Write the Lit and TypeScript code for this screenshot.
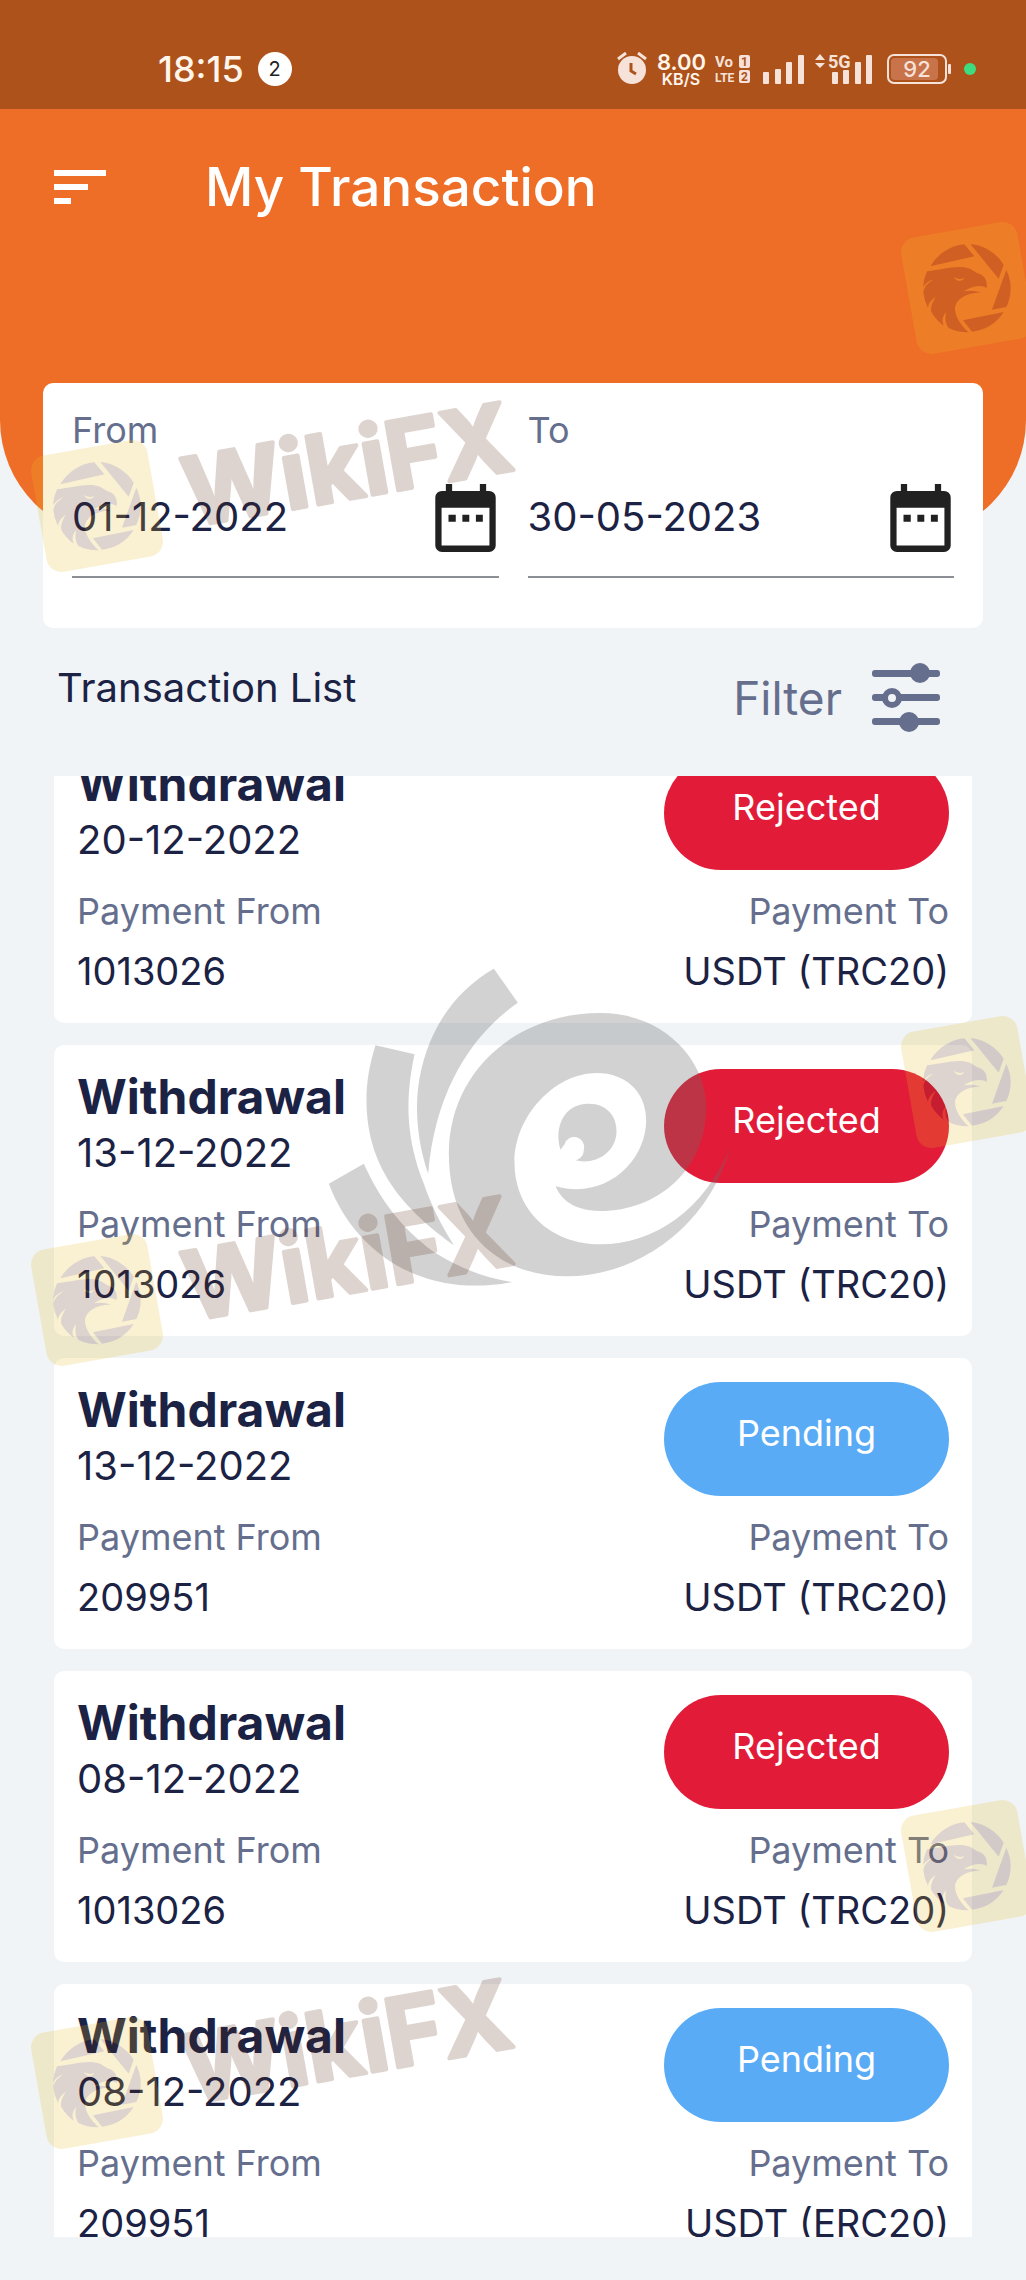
import { LitElement, html, svg, css } from "lit";
import { customElement, property } from "lit/decorators.js";

type Status = "Rejected" | "Pending";

interface Transaction {
  kind: string;
  date: string;
  status: Status;
  from: string;
  to: string;
}

const TRANSACTIONS: Transaction[] = [
  { kind: "Withdrawal", date: "20-12-2022", status: "Rejected", from: "1013026", to: "USDT (TRC20)" },
  { kind: "Withdrawal", date: "13-12-2022", status: "Rejected", from: "1013026", to: "USDT (TRC20)" },
  { kind: "Withdrawal", date: "13-12-2022", status: "Pending", from: "209951", to: "USDT (TRC20)" },
  { kind: "Withdrawal", date: "08-12-2022", status: "Rejected", from: "1013026", to: "USDT (TRC20)" },
  { kind: "Withdrawal", date: "08-12-2022", status: "Pending", from: "209951", to: "USDT (ERC20)" },
];

/* Tilted tile with an eagle inside a camera shutter, centred on the origin. */
const eagleTile = svg`
  <g transform="rotate(-10)">
    <rect x="-59" y="-59" width="118" height="118" rx="15" fill="#ebb923"></rect>
  </g>
  <g transform="scale(0.3333)" fill="#5a2814">
    <path d="M-110,-65 A132,132 0 0 1 -8,-131 L22,-95 Z"></path>
    <path d="M10,-132 A132,132 0 0 1 110,-70 L95,-28 Z"></path>
    <path d="M118,-55 A132,132 0 0 1 118,57 L75,65 Z"></path>
    <path d="M110,72 A132,132 0 0 1 15,131 L-12,97 Z"></path>
    <path d="M-120,-50 C-80,-54 -40,-66 -10,-62 C12,-60 22,-48 32,-44 C54,-38 62,-20 59,0 C45,-10 18,-8 -10,10
      C10,6 28,8 42,14 C0,12 -38,35 -36,65 C-34,90 -15,115 5,133 A132,132 0 0 1 -55,120 C-66,105 -66,92 -63,72
      C-74,86 -76,98 -70,113 A132,132 0 0 1 -107,72 C-110,56 -104,44 -94,26 C-110,38 -116,48 -117,60
      A132,132 0 0 1 -131,12 C-128,-4 -118,-14 -100,-26 C-114,-22 -124,-14 -132,-2 A132,132 0 0 1 -120,-50 Z"></path>
    <path d="M-40,-34 C-28,-26 -18,-26 -8,-30 C-14,-18 -32,-18 -40,-34 Z" fill="#ebb923"></path>
  </g>`;

@customElement("status-bar")
export class StatusBar extends LitElement {
  static styles = css`
    :host {
      display: flex;
      align-items: center;
      height: 81px;
      padding: 28px 50px 0 158px;
      background: #ae521c;
      color: #fff5ea;
    }
    .time {
      font-size: 36px;
      font-weight: 500;
      line-height: 40px;
    }
    .count {
      display: grid;
      place-items: center;
      width: 34px;
      height: 34px;
      margin-left: 14px;
      border-radius: 50%;
      background: #fff;
      color: #222;
      font-size: 20px;
      line-height: 20px;
    }
    .icons {
      display: flex;
      align-items: center;
      gap: 10px;
      margin-left: auto;
      fill: #f6e2d9;
    }
    .speed {
      width: 48px;
      text-align: center;
      font-weight: 600;
      font-size: 22px;
      line-height: 20px;
      white-space: nowrap;
    }
    .unit {
      display: block;
      font-size: 16px;
      line-height: 14px;
    }
    .icons text {
      font-family: "Roboto", sans-serif;
      font-weight: 700;
    }
    .icons .level {
      font-family: "Inter", sans-serif;
      font-weight: 500;
    }
    svg {
      display: block;
    }
  `;

  render() {
    return html`
      <span class="time">18:15</span>
      <span class="count">2</span>
      <div class="icons">
        <svg width="30" height="34" viewBox="0 0 30 34" role="img" aria-label="Alarm">
          <circle cx="15" cy="18" r="14"></circle>
          <path d="M1 7 L9 1 M29 7 L21 1" stroke="#f6e2d9" stroke-width="3" fill="none"></path>
          <path d="M14 11 V19 L19 22" stroke="#ae521c" stroke-width="3" fill="none"></path>
        </svg>
        <div class="speed">8.00<span class="unit">KB/S</span></div>
        <svg width="38" height="32" viewBox="0 0 38 32">
          <text x="0" y="14" font-size="15">Vo</text>
          <text x="0" y="29" font-size="12">LTE</text>
          <rect x="24" y="2" width="11" height="13" rx="2"></rect>
          <rect x="24" y="17" width="11" height="13" rx="2"></rect>
          <text x="26" y="13" font-size="12" fill="#ae521c">1</text>
          <text x="26" y="28" font-size="12" fill="#ae521c">2</text>
        </svg>
        <svg width="42" height="32" viewBox="0 0 42 32" role="img" aria-label="Signal">
          <rect x="0" y="19" width="6" height="12" rx="1"></rect>
          <rect x="12" y="16" width="6" height="15" rx="1"></rect>
          <rect x="23" y="9" width="6" height="22" rx="1"></rect>
          <rect x="35" y="2" width="6" height="29" rx="1"></rect>
        </svg>
        <svg width="62" height="32" viewBox="0 0 62 32" role="img" aria-label="5G signal">
          <path d="M0 7 L5 1 L10 7 Z M0 10 L5 15 L10 10 Z"></path>
          <text x="13" y="15" font-size="18">5G</text>
          <rect x="17" y="19" width="6" height="12" rx="1"></rect>
          <rect x="28" y="17" width="6" height="14" rx="1"></rect>
          <rect x="40" y="9" width="6" height="22" rx="1"></rect>
          <rect x="51" y="2" width="6" height="29" rx="1"></rect>
        </svg>
        <svg width="67" height="32" viewBox="0 0 67 32">
          <rect x="1" y="2" width="58" height="28" rx="6" fill="none" stroke="#f6e2d9" stroke-width="2"></rect>
          <rect x="4" y="5" width="47" height="22" rx="4" fill="#c8734a"></rect>
          <rect x="61" y="11" width="3" height="10" rx="1"></rect>
          <text class="level" x="30" y="24" font-size="22" text-anchor="middle">92</text>
        </svg>
        <svg width="12" height="12" viewBox="0 0 12 12"><circle cx="6" cy="6" r="6" fill="#3ddc7f"></circle></svg>
      </div>
    `;
  }
}

@customElement("date-field")
export class DateField extends LitElement {
  @property() label = "";
  @property() value = "";

  static styles = css`
    :host {
      display: block;
      min-width: 0;
    }
    .label {
      display: block;
      color: #656f8d;
      font-size: 36px;
      line-height: 40px;
    }
    .row {
      display: flex;
      align-items: center;
      margin-top: 34px;
      padding: 0 3px 24px 0;
      border-bottom: 2px solid #8c8f94;
    }
    .input {
      flex: 1;
      box-sizing: border-box;
      min-width: 0;
      height: 68px;
      padding: 0 0 4px;
      border: 0;
      outline: 0;
      background: none;
      color: #1b2244;
      font: inherit;
      font-size: 40px;
    }
    .pick {
      padding: 0;
      border: 0;
      background: none;
      cursor: pointer;
    }
    svg {
      display: block;
    }
  `;

  render() {
    return html`
      <label class="label" for="date">${this.label}</label>
      <div class="row">
        <input class="input" id="date" type="text" .value=${this.value} />
        <button class="pick" aria-label="Pick a date">
          <svg width="61" height="68" viewBox="0 0 183 206" fill="#212121">
            <path
              fill-rule="evenodd"
              d="M32 0 H51 V21 H135 V0 H154 V21 H163 A20 20 0 0 1 183 41 V186 A20 20 0 0 1 163 206 H20
                A20 20 0 0 1 0 186 V41 A20 20 0 0 1 20 21 H32 Z M19 72 V186 H164 V72 Z"
            ></path>
            <path d="M40 93 H62 V114 H40 Z M82 93 H103 V114 H82 Z M123 93 H144 V114 H123 Z"></path>
          </svg>
        </button>
      </div>
    `;
  }
}

@customElement("transaction-card")
export class TransactionCard extends LitElement {
  @property({ attribute: false }) item!: Transaction;

  static styles = css`
    :host {
      display: block;
      padding: 24px 23px 21px;
      border-radius: 10px;
      background: #fff;
      color: #1b2244;
    }
    .row {
      display: flex;
      justify-content: space-between;
    }
    .details {
      margin-top: 12px;
    }
    .kind {
      margin: 0;
      font-size: 48px;
      font-weight: 700;
      line-height: 56px;
    }
    .date {
      font-size: 40px;
      line-height: 56px;
    }
    .status {
      display: flex;
      align-items: center;
      justify-content: center;
      box-sizing: border-box;
      width: 285px;
      height: 114px;
      padding-bottom: 12px;
      border-radius: 57px;
      color: #fff;
      font-size: 36px;
    }
    .rejected {
      background: #e21c38;
    }
    .pending {
      background: #5aabf6;
    }
    .label {
      color: #656f8d;
      font-size: 36px;
      line-height: 58px;
    }
    .value {
      font-size: 38px;
      line-height: 62px;
    }
    .end {
      text-align: right;
    }
  `;

  render() {
    const { kind, date, status, from, to } = this.item;
    return html`
      <div class="row">
        <div>
          <h2 class="kind">${kind}</h2>
          <div class="date">${date}</div>
        </div>
        <div class="status ${status.toLowerCase()}">${status}</div>
      </div>
      <div class="row details">
        <div>
          <div class="label">Payment From</div>
          <div class="value">${from}</div>
        </div>
        <div class="end">
          <div class="label">Payment To</div>
          <div class="value">${to}</div>
        </div>
      </div>
    `;
  }
}

@customElement("app-root")
export class AppRoot extends LitElement {
  static styles = css`
    :host {
      position: relative;
      display: flex;
      flex-direction: column;
      height: 100vh;
      overflow: hidden;
      background: #f0f4f7;
      color: #1b2244;
      font-family: "Inter", "Open Sans", sans-serif;
    }
    .header {
      display: flex;
      align-items: center;
      gap: 99px;
      padding: 46px 54px 319px;
      border-radius: 0 0 118px 118px;
      background: #ee6e27;
      color: #fff;
    }
    .menu,
    .filter {
      padding: 0;
      border: 0;
      background: none;
      color: inherit;
      font: inherit;
      cursor: pointer;
    }
    .title {
      margin: 0;
      font-size: 53px;
      font-weight: 500;
      line-height: 64px;
    }
    .range {
      display: grid;
      grid-template-columns: 1fr 1fr;
      gap: 29px;
      margin: -155px 43px 0;
      padding: 27px 29px 50px;
      border-radius: 10px;
      background: #fff;
    }
    .list-head {
      display: flex;
      justify-content: space-between;
      align-items: flex-start;
      padding: 32px 86px 40px 57px;
    }
    .list-title {
      margin: 0;
      font-size: 40px;
      font-weight: 400;
      line-height: 56px;
    }
    .filter {
      display: flex;
      align-items: center;
      gap: 30px;
      height: 76px;
      color: #656f8d;
      font-size: 46px;
    }
    .list {
      display: flex;
      flex: 1;
      flex-direction: column;
      gap: 22px;
      min-height: 0;
      margin: 0 54px 43px;
      overflow-y: auto;
      scrollbar-width: none;
    }
    .card {
      flex: none;
    }
    svg {
      display: block;
    }
    .mark {
      position: absolute;
      opacity: 0.2;
      pointer-events: none;
    }
    .mark-left {
      left: 20px;
    }
    .mark-right {
      right: 0;
    }
    .mark-text {
      font-size: 95px;
      font-weight: 700;
      fill: #5a2814;
      stroke: #5a2814;
      stroke-width: 4px;
      stroke-linejoin: round;
    }
    .row-1 {
      top: 350px;
    }
    .row-2 {
      top: 1144px;
    }
    .row-3 {
      top: 1927px;
    }
    .row-a {
      top: 212px;
    }
    .row-b {
      top: 1006px;
    }
    .row-c {
      top: 1790px;
    }
    .eye {
      position: absolute;
      top: 967px;
      left: 327px;
      opacity: 0.3;
      pointer-events: none;
    }
  `;

  /* The list opens part of the way into its first card. */
  async firstUpdated() {
    const list = this.renderRoot.querySelector(".list") as HTMLElement;
    const cards = Array.from(list.querySelectorAll("transaction-card")) as TransactionCard[];
    await Promise.all(cards.map((card) => card.updateComplete));
    list.scrollTop = 44;
  }

  render() {
    return html`
      <status-bar></status-bar>
      <header class="header">
        <button class="menu" aria-label="Menu">
          <svg width="52" height="34" viewBox="0 0 52 34" fill="#fff">
            <path d="M0 0 H52 V6 H0 Z M0 14 H34 V20 H0 Z M0 28 H17 V34 H0 Z"></path>
          </svg>
        </button>
        <h1 class="title">My Transaction</h1>
      </header>
      <section class="range">
        <date-field label="From" value="01-12-2022"></date-field>
        <date-field label="To" value="30-05-2023"></date-field>
      </section>
      <div class="list-head">
        <h2 class="list-title">Transaction List</h2>
        <button class="filter">
          Filter
          <svg width="68" height="70" viewBox="0 0 68 70" fill="#656f8d">
            <rect x="0" y="7" width="68" height="7" rx="3"></rect>
            <rect x="0" y="31" width="68" height="7" rx="3"></rect>
            <rect x="0" y="55" width="68" height="7" rx="3"></rect>
            <circle cx="48" cy="10" r="10"></circle>
            <circle cx="20" cy="35" r="7" fill="#f0f4f7" stroke="#656f8d" stroke-width="6"></circle>
            <circle cx="37" cy="59" r="10"></circle>
          </svg>
        </button>
      </div>
      <main class="list">
        ${TRANSACTIONS.map((item) => html`<transaction-card class="card" .item=${item}></transaction-card>`)}
      </main>
      <svg class="eye" width="407" height="320" viewBox="80 80 1220 960" fill="#6c6c6c" aria-hidden="true">
        <path d="M580,85 L652,187 C520,280 405,440 383,700 C352,610 345,520 352,450 C370,290 450,160 580,85 Z"></path>
        <path
          d="M225,315 L342,342 C312,480 318,600 370,730 C390,790 420,850 460,915 C330,820 198,700 198,480 C198,420 208,370 225,315 Z"
        ></path>
        <path
          d="M190,670 L85,730 C130,850 220,950 340,1000 C430,1037 530,1045 635,1025 C560,1015 480,985 400,935 C300,860 240,780 190,670 Z"
        ></path>
        <path
          d="M1290,620 C1220,870 1000,1008 800,1008 C600,1008 445,880 445,640 C445,400 640,218 900,218
            C1090,218 1217,360 1217,500 C1217,690 1070,812 900,812 C830,812 785,785 765,738
            C920,780 1037,660 1037,540 C1037,450 970,398 890,398 C760,398 642,530 642,665
            C642,810 750,912 900,912 C1060,912 1210,810 1290,620 Z"
        ></path>
        <path
          d="M780,628 C760,560 790,490 865,490 C920,490 950,530 948,575 C946,640 880,675 825,660
            C840,655 850,645 850,628 A30,30 0 0 0 792,612 Z"
        ></path>
      </svg>
      ${["row-1", "row-2", "row-3"].map(
        (row) => html`
          <svg class="mark mark-left ${row}" width="540" height="260" viewBox="0 0 540 260" aria-hidden="true">
            <g transform="translate(77 156)">${eagleTile}</g>
            <text class="mark-text" transform="translate(170 177) rotate(-10)">WikiFX</text>
          </svg>
        `
      )}
      ${["row-a", "row-b", "row-c"].map(
        (row) => html`
          <svg class="mark mark-right ${row}" width="135" height="152" viewBox="0 0 135 152" aria-hidden="true">
            <g transform="translate(76 76)">${eagleTile}</g>
          </svg>
        `
      )}
    `;
  }
}
